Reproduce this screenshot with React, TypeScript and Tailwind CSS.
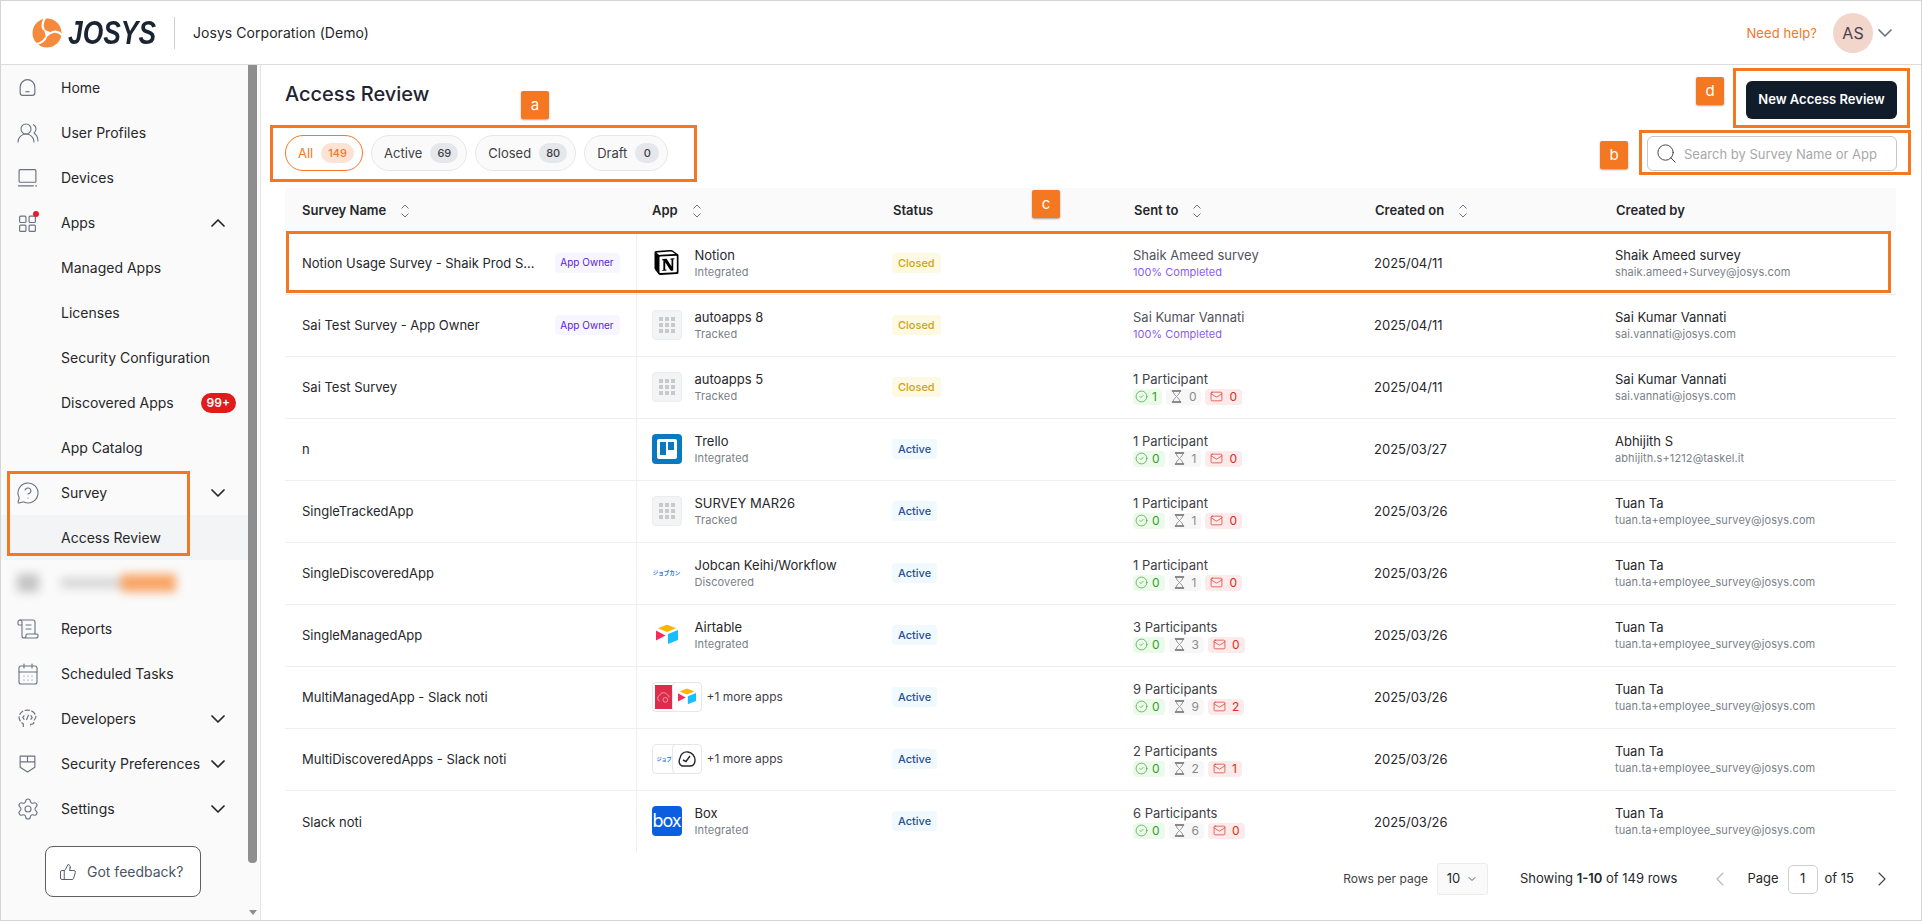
import { ChevronDown, ChevronLeft, ChevronRight, ChevronUp, CircleCheck, Mail, Search, Settings, ThumbsUp, CalendarDays, ScrollText, UsersRound, MessageCircleQuestion } from "lucide-react";
import { SiNotion } from "react-icons/si";
import type { ReactNode } from "react";

const iconCls = "w-[21px] h-[21px] text-[#6b7280]";
const lucideCls = "w-[24px] h-[24px] -ml-[1px] text-[#6b7280]";

const HomeIcon = () => (
  <svg viewBox="0 0 20 20" className={iconCls} fill="none" stroke="currentColor" strokeWidth="1.1">
    <path d="M3 9.5 C3 5.5 6.5 2.5 10 2.5 C13.5 2.5 17 5.5 17 9.5 V15 A2.5 2.5 0 0 1 14.5 17.5 H5.5 A2.5 2.5 0 0 1 3 15 Z" />
    <path d="M8 14 H12" />
  </svg>
);

const DevicesIcon = () => (
  <svg viewBox="0 0 20 20" className={iconCls} fill="none" stroke="currentColor" strokeWidth="1.1">
    <rect x="2" y="2.5" width="16" height="12" rx="1" />
    <path d="M1 18 H16 M17.5 18 H19" />
  </svg>
);

const AppsIcon = () => (
  <span className="relative block w-[21px]">
    <svg viewBox="0 0 20 20" className={iconCls} fill="none" stroke="currentColor" strokeWidth="1.1">
      <rect x="2.5" y="4" width="6" height="6" rx="1" />
      <rect x="11.5" y="4" width="6" height="6" rx="1" />
      <rect x="2.5" y="12.5" width="6" height="6" rx="1" />
      <rect x="11.5" y="12.5" width="6" height="6" rx="1" />
    </svg>
    <span className="absolute -top-[1px] right-[-1px] w-[6px] h-[6px] rounded-full bg-[#e11d2e]" />
  </span>
);

const DevIcon = () => (
  <svg viewBox="0 0 20 20" className={iconCls} fill="none" stroke="currentColor" strokeWidth="1.1">
    <path d="M6 18 V15 C3.5 13.5 2 11.5 2 9 C2 5 5.5 2 10 2 C14.5 2 18 5 18 9 L16 12 V13.5 C16 15 15 15.5 13 15.5 V18" strokeDasharray="5 1.5" />
    <path d="M7 7 L5.5 9 L7 11 M13 7 L14.5 9 L13 11 M11 6.5 L9 11.5" />
  </svg>
);

const ShieldIcon = () => (
  <svg viewBox="0 0 20 20" className={iconCls} fill="none" stroke="currentColor" strokeWidth="1.1">
    <path d="M3 3 H17 V13.5 L10 18 L3 13.5 Z" strokeLinejoin="round" />
    <path d="M3 8.5 H17 M10 3 V8.5" />
  </svg>
);

const HourglassIcon = () => (
  <svg viewBox="0 0 12 14" className="w-[11px] h-[13px]" fill="none" stroke="currentColor" strokeWidth="1">
    <path d="M1 1 H11 M1 13 H11" strokeWidth="2" />
    <path d="M2.5 2 C2.5 5 9.5 9 9.5 12 M9.5 2 C9.5 5 2.5 9 2.5 12" />
  </svg>
);

type NavItem = { label: string; icon?: ReactNode; chevron?: "up" | "down"; badge?: string; active?: boolean };

const navTop: NavItem[] = [
  { label: "Home", icon: <HomeIcon /> },
  { label: "User Profiles", icon: <UsersRound className={lucideCls} strokeWidth={1.1} /> },
  { label: "Devices", icon: <DevicesIcon /> },
  { label: "Apps", icon: <AppsIcon />, chevron: "up" },
  { label: "Managed Apps" },
  { label: "Licenses" },
  { label: "Security Configuration" },
  { label: "Discovered Apps", badge: "99+" },
  { label: "App Catalog" },
  { label: "Survey", icon: <MessageCircleQuestion className={lucideCls} strokeWidth={1.1} />, chevron: "down" },
  { label: "Access Review", active: true },
];

const navBottom: NavItem[] = [
  { label: "Reports", icon: <ScrollText className={lucideCls} strokeWidth={1.1} /> },
  { label: "Scheduled Tasks", icon: <CalendarDays className={lucideCls} strokeWidth={1.1} /> },
  { label: "Developers", icon: <DevIcon />, chevron: "down" },
  { label: "Security Preferences", icon: <ShieldIcon />, chevron: "down" },
  { label: "Settings", icon: <Settings className={lucideCls} strokeWidth={1.1} />, chevron: "down" },
];

function NavRow({ item }: { item: NavItem }) {
  return (
    <div className={`h-[45px] flex items-center pl-[16px] pr-[10px] text-[14px] text-[#27272a] ${item.active ? "bg-[#f3f4f6]" : ""}`}>
      <span className="w-[44px] shrink-0">{item.icon}</span>
      <span className="flex-1 whitespace-nowrap">{item.label}</span>
      {item.badge && (
        <span className="h-[20px] px-[6px] mr-[2px] rounded-full bg-[#e01b1b] text-white text-[12px] font-semibold flex items-center">{item.badge}</span>
      )}
      {item.chevron === "up" && <ChevronUp className="w-[24px] h-[24px] text-[#27272a] mr-[8px]" strokeWidth={1.75} />}
      {item.chevron === "down" && <ChevronDown className="w-[24px] h-[24px] text-[#27272a] mr-[8px]" strokeWidth={1.75} />}
    </div>
  );
}

const SortIcon = () => (
  <svg viewBox="0 0 10 16" className="w-[10px] h-[16px] text-[#6b7280]" fill="none" stroke="currentColor" strokeWidth="1">
    <path d="M1.5 5.5 L5 2 L8.5 5.5 M1.5 10.5 L5 14 L8.5 10.5" />
  </svg>
);

const GridTile = () => (
  <span className="w-[30px] h-[30px] rounded-[4px] bg-[#f3f4f6] border border-[#ececec] grid grid-cols-3 gap-[2px] p-[6px]">
    {Array.from({ length: 9 }).map((_, i) => (
      <span key={i} className="bg-[#c9c9c9]" />
    ))}
  </span>
);

const Jobcan = ({ small }: { small?: boolean }) => (
  <span className={`font-['Noto_Sans_CJK_JP',sans-serif] font-bold text-[#1d6fe0] whitespace-nowrap ${small ? "text-[5px]" : "text-[5.5px]"}`}>ジョブカン</span>
);

const AirtableLogo = () => (
  <svg viewBox="0 0 24 22" className="w-[24px] h-[22px]">
    <path d="M11 1 L3 4.3 L12 8 L21 4.3 L13 1 Q12 .6 11 1Z" fill="#fcb400" />
    <path d="M13 10 V20 L23 16 V6 Z" fill="#18bfff" />
    <path d="M1 6.5 V16.5 L10.5 11.5 Z" fill="#f82b60" />
  </svg>
);

const Tile = ({ className, children }: { className?: string; children: ReactNode }) => (
  <span className={`w-[30px] h-[30px] rounded-[4px] flex items-center justify-center shrink-0 ${className ?? ""}`}>{children}</span>
);

const tiles: Record<string, ReactNode> = {
  notion: <Tile><SiNotion className="w-[25px] h-[25px] text-black" /></Tile>,
  grid: <GridTile />,
  trello: (
    <Tile className="bg-[#0a79bf]">
      <span className="w-[20px] h-[20px] rounded-[2px] bg-white flex gap-[2px] p-[3px] items-start">
        <span className="w-[6px] h-[13px] bg-[#0a79bf]" />
        <span className="w-[6px] h-[8px] bg-[#0a79bf]" />
      </span>
    </Tile>
  ),
  jobcan: <Tile><Jobcan /></Tile>,
  airtable: <Tile><AirtableLogo /></Tile>,
  box: <Tile className="bg-[#0a5fe0]"><span className="text-white text-[18px] leading-none tracking-[-1px]">box</span></Tile>,
};

const MultiManaged = () => (
  <span className="relative w-[50px] h-[30px] block shrink-0">
    <span className="absolute left-0 top-0 w-[30px] h-[30px] border border-[#e5e7eb] rounded-[4px] bg-white p-[2px]">
      <span className="flex items-center justify-center w-[18px] h-[24px] bg-[#dd2c4c]">
        <svg viewBox="0 0 16 16" className="w-[15px] h-[15px]" fill="none" stroke="#f7b3c0" strokeWidth=".8">
          <path d="M4 12 A3.5 3.5 0 0 1 4 5.5 A4.5 4.5 0 0 1 12 5 A3 3 0 0 1 14 8" />
          <circle cx="10" cy="10.5" r="2.5" />
        </svg>
      </span>
    </span>
    <span className="absolute left-[20px] top-0 w-[30px] h-[30px] border border-[#e5e7eb] rounded-[4px] bg-white flex items-center justify-center">
      <svg viewBox="0 0 24 22" className="w-[20px] h-[18px]">
        <path d="M11 1 L3 4.3 L12 8 L21 4.3 L13 1 Q12 .6 11 1Z" fill="#fcb400" />
        <path d="M13 10 V20 L23 16 V6 Z" fill="#18bfff" />
        <path d="M1 6.5 V16.5 L10.5 11.5 Z" fill="#f82b60" />
      </svg>
    </span>
  </span>
);

const MultiDiscovered = () => (
  <span className="relative w-[50px] h-[30px] block shrink-0">
    <span className="absolute left-0 top-0 w-[30px] h-[30px] border border-[#e5e7eb] rounded-[4px] bg-white pl-[4px] flex items-center overflow-hidden">
      <Jobcan small />
    </span>
    <span className="absolute left-[20px] top-0 w-[30px] h-[30px] border border-[#e5e7eb] rounded-[4px] bg-white flex items-center justify-center">
      <svg viewBox="0 0 20 20" className="w-[20px] h-[20px]" fill="none" stroke="#27272a" strokeWidth="1.4">
        <path d="M5 17 C2 16 1.5 12 3 9 C4 5 7 2.5 11 3 C15 3.5 18 7 18 11 C18 15 16 17 13 17 Z" strokeLinejoin="round" />
        <path d="M6 11 L9 12.5 L13 7" />
      </svg>
    </span>
  </span>
);

type Row = {
  name: string;
  owner?: boolean;
  app: { tile: string; name: string; sub: string } | { multi: "managed" | "discovered" };
  status: "Closed" | "Active";
  sent: { name: string } | { label: string; counts: [number, number, number] };
  date: string;
  by: string;
  email: string;
};

const rows: Row[] = [
  { name: "Notion Usage Survey - Shaik Prod S...", owner: true, app: { tile: "notion", name: "Notion", sub: "Integrated" }, status: "Closed", sent: { name: "Shaik Ameed survey" }, date: "2025/04/11", by: "Shaik Ameed survey", email: "shaik.ameed+Survey@josys.com" },
  { name: "Sai Test Survey - App Owner", owner: true, app: { tile: "grid", name: "autoapps 8", sub: "Tracked" }, status: "Closed", sent: { name: "Sai Kumar Vannati" }, date: "2025/04/11", by: "Sai Kumar Vannati", email: "sai.vannati@josys.com" },
  { name: "Sai Test Survey", app: { tile: "grid", name: "autoapps 5", sub: "Tracked" }, status: "Closed", sent: { label: "1 Participant", counts: [1, 0, 0] }, date: "2025/04/11", by: "Sai Kumar Vannati", email: "sai.vannati@josys.com" },
  { name: "n", app: { tile: "trello", name: "Trello", sub: "Integrated" }, status: "Active", sent: { label: "1 Participant", counts: [0, 1, 0] }, date: "2025/03/27", by: "Abhijith S", email: "abhijith.s+1212@taskel.it" },
  { name: "SingleTrackedApp", app: { tile: "grid", name: "SURVEY MAR26", sub: "Tracked" }, status: "Active", sent: { label: "1 Participant", counts: [0, 1, 0] }, date: "2025/03/26", by: "Tuan Ta", email: "tuan.ta+employee_survey@josys.com" },
  { name: "SingleDiscoveredApp", app: { tile: "jobcan", name: "Jobcan Keihi/Workflow", sub: "Discovered" }, status: "Active", sent: { label: "1 Participant", counts: [0, 1, 0] }, date: "2025/03/26", by: "Tuan Ta", email: "tuan.ta+employee_survey@josys.com" },
  { name: "SingleManagedApp", app: { tile: "airtable", name: "Airtable", sub: "Integrated" }, status: "Active", sent: { label: "3 Participants", counts: [0, 3, 0] }, date: "2025/03/26", by: "Tuan Ta", email: "tuan.ta+employee_survey@josys.com" },
  { name: "MultiManagedApp - Slack noti", app: { multi: "managed" }, status: "Active", sent: { label: "9 Participants", counts: [0, 9, 2] }, date: "2025/03/26", by: "Tuan Ta", email: "tuan.ta+employee_survey@josys.com" },
  { name: "MultiDiscoveredApps - Slack noti", app: { multi: "discovered" }, status: "Active", sent: { label: "2 Participants", counts: [0, 2, 1] }, date: "2025/03/26", by: "Tuan Ta", email: "tuan.ta+employee_survey@josys.com" },
  { name: "Slack noti", app: { tile: "box", name: "Box", sub: "Integrated" }, status: "Active", sent: { label: "6 Participants", counts: [0, 6, 0] }, date: "2025/03/26", by: "Tuan Ta", email: "tuan.ta+employee_survey@josys.com" },
];

const columns = [
  { label: "Survey Name", sort: true, pad: "pl-[17px]" },
  { label: "App", sort: true, pad: "pl-[16px]" },
  { label: "Status", pad: "pl-[17px]" },
  { label: "Sent to", sort: true, pad: "pl-[17px]" },
  { label: "Created on", sort: true, pad: "pl-[17px]" },
  { label: "Created by", pad: "pl-[17px]" },
];

const tabs = [
  { label: "All", count: 149, active: true },
  { label: "Active", count: 69 },
  { label: "Closed", count: 80 },
  { label: "Draft", count: 0 },
];

function Counts({ counts }: { counts: [number, number, number] }) {
  return (
    <div className="flex gap-[4px] text-[12px] leading-[16px] mt-[1px]">
      <span className="h-[16px] px-[2px] pr-[5px] rounded-[4px] bg-[#ecfbe9] text-[#2f9e2f] flex items-center gap-[4px]">
        <CircleCheck className="w-[13px] h-[13px]" strokeWidth={1.25} />
        {counts[0]}
      </span>
      <span className="h-[16px] px-[5px] rounded-[4px] bg-[#f7f7f7] text-[#8a8a8a] flex items-center gap-[7px]">
        <HourglassIcon />
        {counts[1]}
      </span>
      <span className="h-[16px] px-[5px] rounded-[4px] bg-[#fdeaea] text-[#d92d20] flex items-center gap-[6px]">
        <Mail className="w-[13px] h-[13px]" strokeWidth={1.25} />
        {counts[2]}
      </span>
    </div>
  );
}

const Box = ({ cls }: { cls: string }) => <div className={`absolute border-[3px] border-[#f47721] pointer-events-none ${cls}`} />;

const Tag = ({ cls, children }: { cls: string; children: string }) => (
  <div className={`absolute w-[28px] h-[28px] rounded-[2px] bg-[#f47721] text-white text-[15px] flex items-center justify-center shadow-[0_1px_2px_rgba(0,0,0,0.35)] ${cls}`}>{children}</div>
);

export default function App() {
  return (
    <div className="relative w-[1922px] h-[921px] overflow-hidden bg-white border border-[#d4d4d4] flex flex-col font-['Inter',sans-serif] text-[#27272a]">
      <header className="h-[64px] shrink-0 border-b border-[#dcdcdc] flex items-center pl-[31px] pr-[24px]">
        <svg viewBox="0 0 30 30" className="w-[30px] h-[30px]">
          <circle cx="15" cy="15" r="14.5" fill="#f58a3c" />
          <g fill="none" stroke="#fff" strokeWidth="2.2">
            <path d="M12 12 C10 9 10 5 13 0" />
            <path d="M19 15 C22 13 26 13 30 17" />
            <path d="M14 19 C13 22 10 25 4 26" />
          </g>
          <path d="M12 11.5 L20 15 L14 19.5 Z" fill="#fff" />
        </svg>
        <span className="ml-[6px] w-[86px] inline-block origin-left scale-x-[0.8] font-['Liberation_Sans',sans-serif] font-bold italic text-[33px] leading-none text-[#1a2433] whitespace-nowrap">JOSYS</span>
        <span className="ml-[20px] w-px h-[32px] bg-[#cfcfcf]" />
        <span className="ml-[18px] text-[14px] tracking-[0.05px] text-[#27272a]">Josys Corporation (Demo)</span>
        <div className="flex-1" />
        <span className="mt-[3px] text-[13px] tracking-[0.1px] text-[#f47721]">Need help?</span>
        <span className="ml-[16px] w-[40px] h-[40px] rounded-full bg-[#f2d6cc] text-[#4a3f48] text-[16px] flex items-center justify-center">AS</span>
        <ChevronDown className="w-[24px] h-[24px] text-[#6b7280]" strokeWidth={1.75} />
      </header>

      <div className="flex-1 flex min-h-0">
        <aside className="w-[260px] shrink-0 bg-[#fafafa] border-r border-[#e5e5e5] flex">
          <div className="w-[247px] shrink-0">
            {navTop.map((item) => (
              <NavRow key={item.label} item={item} />
            ))}
            <div className="h-[46px] flex items-center pl-[16px] blur-[5px]">
              <span className="w-[22px] h-[18px] bg-[#c4c4c4] mr-[22px]" />
              <span className="w-[60px] h-[10px] bg-[#d4d4d4]" />
              <span className="w-[55px] h-[18px] bg-[#f9a567]" />
            </div>
            {navBottom.map((item) => (
              <NavRow key={item.label} item={item} />
            ))}
            <button className="mt-[15px] ml-[44px] w-[156px] h-[51px] rounded-[8px] border border-[#5f5f5f] bg-white flex items-center pl-[13px] gap-[10px] text-[14px] text-[#4b5563]">
              <ThumbsUp className="w-[18px] h-[18px]" strokeWidth={1.25} />
              Got feedback?
            </button>
          </div>
          <div className="w-[9px] shrink-0 flex flex-col items-center justify-between pb-[5px]">
            <div className="w-[9px] h-[798px] bg-[#8e8e8e] rounded-b-[4px]" />
            <div className="w-0 h-0 border-x-[4px] border-x-transparent border-t-[5px] border-t-[#8e8e8e]" />
          </div>
        </aside>

        <main className="flex-1 min-w-0 pl-[24px] pr-[24px] pt-[16px]">
          <div className="flex justify-between items-start">
            <h1 className="text-[20px] leading-[26px] font-medium text-[#1f2430]">Access Review</h1>
            <button className="w-[151px] h-[38px] rounded-[6px] bg-[#111c2a] text-white text-[13px] font-semibold">New Access Review</button>
          </div>

          <div className="mt-[16px] flex justify-between items-start">
            <div className="flex gap-[8px]">
              {tabs.map((t) => (
                <div
                  key={t.label}
                  className={`h-[36px] pl-[12px] pr-[8px] rounded-full border flex items-center gap-[8px] text-[13px] ${t.active ? "bg-white border-[#f47721] text-[#f47721]" : "bg-[#fafafa] border-[#e7e7e7] text-[#3f3f46]"}`}
                >
                  <span className="pt-[2px]">{t.label}</span>
                  <span className={`h-[20px] min-w-[24px] px-[7px] rounded-full text-[11px] font-medium flex items-center justify-center ${t.active ? "bg-[#fde3d5] text-[#f47721]" : "bg-[#e5e7eb] text-[#3f3f46]"}`}>{t.count}</span>
                </div>
              ))}
            </div>
            <div className="mt-px w-[250px] h-[35px] rounded-[6px] border border-[#c8c8c8] flex items-center pl-[7px] gap-[6px] text-[13px] text-[#a8a8a8]">
              <Search className="w-[23px] h-[23px] text-[#3f3f46]" strokeWidth={1} />
              <span className="pt-[2px]">Search by Survey Name or App</span>
            </div>
          </div>

          <table className="mt-[17px] w-[1611px] table-fixed border-collapse text-[13px]">
            <colgroup>
              <col className="w-[351px]" />
              <col className="w-[240px]" />
              <col className="w-[241px]" />
              <col className="w-[241px]" />
              <col className="w-[241px]" />
              <col className="w-[297px]" />
            </colgroup>
            <thead>
              <tr className="h-[44px] bg-[#fafafa]">
                {columns.map((c) => (
                  <th key={c.label} className={`text-left font-semibold text-[#27272a] pt-[2px] ${c.pad}`}>
                    <span className="flex items-center gap-[14px]">
                      {c.label}
                      {c.sort && <SortIcon />}
                    </span>
                  </th>
                ))}
              </tr>
            </thead>
            <tbody>
              {rows.map((r) => (
                <tr key={r.name} className="h-[62px] border-b border-[#eeeeee] last:border-b-0">
                  <td className="pl-[17px] pr-[16px] border-r border-[#eeeeee]">
                    <div className="flex items-center justify-between">
                      <span className="whitespace-nowrap text-[#27272a] pt-[2px]">{r.name}</span>
                      {r.owner && <span className="h-[20px] w-[65px] justify-center rounded-[4px] bg-[#f7f5ff] text-[#5b21d6] text-[10px] flex items-center whitespace-nowrap">App Owner</span>}
                    </div>
                  </td>
                  <td className="pl-[15px]">
                    {"tile" in r.app ? (
                      <div className="flex items-center gap-[13px]">
                        {tiles[r.app.tile]}
                        <div>
                          <div className="leading-[18px] text-[#27272a]">{r.app.name}</div>
                          <div className="leading-[16px] text-[11px] tracking-[0.1px] text-[#7a7f87]">{r.app.sub}</div>
                        </div>
                      </div>
                    ) : (
                      <div className="flex items-center gap-[5px] text-[12px] text-[#3f3f46]">
                        {r.app.multi === "managed" ? <MultiManaged /> : <MultiDiscovered />}
                        +1 more apps
                      </div>
                    )}
                  </td>
                  <td className="pl-[16px]">
                    <span className={`inline-flex h-[20px] px-[6px] rounded-[4px] items-center text-[11px] font-medium ${r.status === "Closed" ? "bg-[#fef9e3] text-[#cfa314]" : "bg-[#f0f9fe] text-[#2a4f93]"}`}>{r.status}</span>
                  </td>
                  <td className="pl-[16px]">
                    {"name" in r.sent ? (
                      <>
                        <div className="leading-[18px] text-[#52525b]">{r.sent.name}</div>
                        <div className="leading-[16px] text-[11px] text-[#8b5cf6]">100% Completed</div>
                      </>
                    ) : (
                      <>
                        <div className="leading-[18px] text-[#3f3f46]">{r.sent.label}</div>
                        <Counts counts={r.sent.counts} />
                      </>
                    )}
                  </td>
                  <td className="pl-[16px] pt-[2px] text-[#27272a]">{r.date}</td>
                  <td className="pl-[16px]">
                    <div className="leading-[18px] text-[#27272a]">{r.by}</div>
                    <div className="leading-[16px] text-[11px] tracking-[0.1px] text-[#7a7f87]">{r.email}</div>
                  </td>
                </tr>
              ))}
            </tbody>
          </table>

          <div className="mt-[11px] w-[1611px] flex items-center justify-end pr-[2px] text-[13px] text-[#27272a]">
            <span className="text-[12px] text-[#3f3f46]">Rows per page</span>
            <span className="ml-[9px] w-[51px] h-[32px] border border-[#ececec] rounded-[3px] bg-[#fafafa] flex items-center justify-center gap-[6px]">
              10 <ChevronDown className="w-[12px] h-[12px]" strokeWidth={1.5} />
            </span>
            <span className="ml-[32px]">Showing <b className="font-semibold">1-10</b> of 149 rows</span>
            <ChevronLeft className="ml-[31px] w-[24px] h-[24px] text-[#b5b5b5]" strokeWidth={1.1} />
            <span className="ml-[15px]">Page</span>
            <span className="ml-[9px] w-[30px] h-[29px] border border-[#cfcfcf] rounded-[5px] flex items-center justify-center">1</span>
            <span className="ml-[7px]">of 15</span>
            <ChevronRight className="ml-[16px] w-[24px] h-[24px] text-[#3f3f46]" strokeWidth={1.1} />
          </div>
        </main>
      </div>

      <Box cls="left-[269px] top-[124px] w-[427px] h-[57px]" />
      <Box cls="left-[285px] top-[230px] w-[1605px] h-[62px]" />
      <Box cls="left-[6px] top-[470px] w-[183px] h-[85px]" />
      <Box cls="left-[1732px] top-[67px] w-[177px] h-[60px]" />
      <Box cls="left-[1638px] top-[129px] w-[272px] h-[45px]" />
      <Tag cls="left-[520px] top-[90px]">a</Tag>
      <Tag cls="left-[1599px] top-[140px]">b</Tag>
      <Tag cls="left-[1031px] top-[189px]">c</Tag>
      <Tag cls="left-[1695px] top-[76px]">d</Tag>
    </div>
  );
}
